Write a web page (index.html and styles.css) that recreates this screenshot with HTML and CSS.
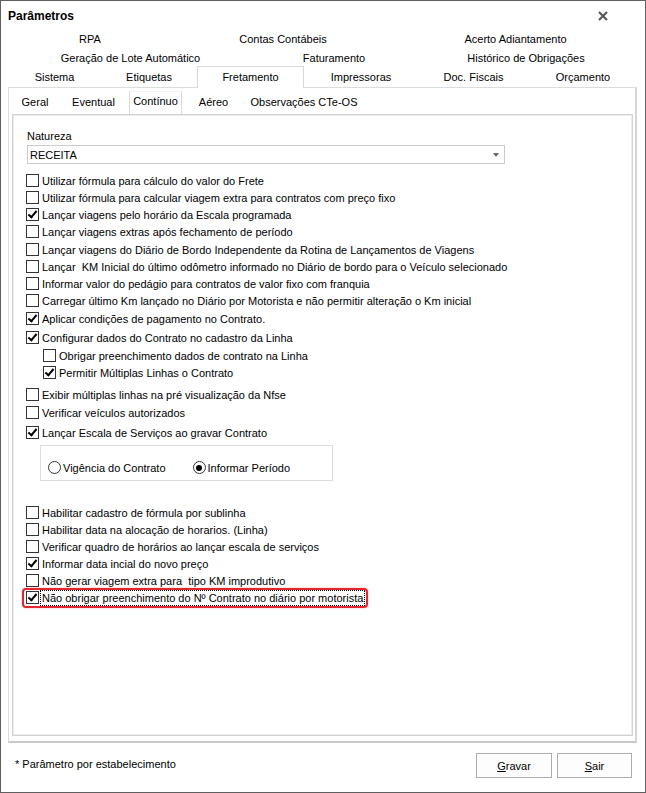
FILE: index.html
```html
<!DOCTYPE html>
<html lang="pt">
<head>
  <meta charset="UTF-8">
  <title>Parâmetros</title>
  <link rel="stylesheet" href="styles.css">
</head>
<body>

  <div class="window">
    <div class="titlebar">
      <span class="title">Parâmetros</span>
      <svg class="close" width="10" height="10" viewBox="0 0 10 10">
        <path d="M1 1 L9 9 M9 1 L1 9" stroke="#555" stroke-width="2" />
      </svg>
    </div>

    <!-- abas principais (3 linhas) -->
    <div class="tabs">
      <div class="tab-row r1">
        <span class="tab w164">RPA</span>
        <span class="tab w222">Contas Contábeis</span>
        <span class="tab w243">Acerto Adiantamento</span>
      </div>
      <div class="tab-row r2">
        <span class="tab w245">Geração de Lote Automático</span>
        <span class="tab w162">Faturamento</span>
        <span class="tab w222">Histórico de Obrigações</span>
      </div>
      <div class="tab-row r3">
        <span class="tab w93">Sistema</span>
        <span class="tab w96">Etiquetas</span>
        <span class="tab w107 sel">Fretamento</span>
        <span class="tab w114">Impressoras</span>
        <span class="tab w111">Doc. Fiscais</span>
        <span class="tab w108">Orçamento</span>
      </div>
    </div>

    <div class="panel">
      <div class="subtabs">
        <span class="subtab s46">Geral</span>
        <span class="subtab s71">Eventual</span>
        <span class="subtab s53 sel">Contínuo</span>
        <span class="subtab s63">Aéreo</span>
        <span class="subtab s118">Observações CTe-OS</span>
      </div>

      <div class="inner">
        <div class="label">Natureza</div>
        <div class="select">
          <span>RECEITA</span>
          <span class="arrow"></span>
        </div>

        <div class="checks">
          <div class="cb"><span class="box"></span><span>Utilizar fórmula para cálculo do valor do Frete</span></div>
          <div class="cb"><span class="box"></span><span>Utilizar fórmula para calcular viagem extra para contratos com preço fixo</span></div>
          <div class="cb"><span class="box on"></span><span>Lançar viagens pelo horário da Escala programada</span></div>
          <div class="cb"><span class="box"></span><span>Lançar viagens extras após fechamento de período</span></div>
          <div class="cb mt1"><span class="box"></span><span>Lançar viagens do Diário de Bordo Independente da Rotina de Lançamentos de Viagens</span></div>
          <div class="cb"><span class="box"></span><span>Lançar &nbsp;KM Inicial do último odômetro informado no Diário de bordo para o Veículo selecionado</span></div>
          <div class="cb"><span class="box"></span><span>Informar valor do pedágio para contratos de valor fixo com franquia</span></div>
          <div class="cb"><span class="box"></span><span>Carregar último Km lançado no Diário por Motorista e não permitir alteração o Km inicial</span></div>
          <div class="cb mt1"><span class="box on"></span><span>Aplicar condições de pagamento no Contrato.</span></div>
          <div class="cb mt2"><span class="box on"></span><span>Configurar dados do Contrato no cadastro da Linha</span></div>
          <div class="cb sub mt1"><span class="box"></span><span>Obrigar preenchimento dados de contrato na Linha</span></div>
          <div class="cb sub"><span class="box on"></span><span>Permitir Múltiplas Linhas o Contrato</span></div>
          <div class="cb mt5"><span class="box"></span><span>Exibir múltiplas linhas na pré visualização da Nfse</span></div>
          <div class="cb mt1"><span class="box"></span><span>Verificar veículos autorizados</span></div>
          <div class="cb mt3"><span class="box on"></span><span>Lançar Escala de Serviços ao gravar Contrato</span></div>

          <div class="group">
            <div class="rb"><span class="radio"></span><span>Vigência do Contrato</span></div>
            <div class="rb second"><span class="radio on"></span><span>Informar Período</span></div>
          </div>

          <div class="cb after-group"><span class="box"></span><span>Habilitar cadastro de fórmula por sublinha</span></div>
          <div class="cb"><span class="box"></span><span>Habilitar data na alocação de horarios. (Linha)</span></div>
          <div class="cb"><span class="box"></span><span>Verificar quadro de horários ao lançar escala de serviços</span></div>
          <div class="cb"><span class="box on"></span><span>Informar data incial do novo preço</span></div>
          <div class="cb"><span class="box"></span><span>Não gerar viagem extra para &nbsp;tipo KM improdutivo</span></div>
          <div class="cb hl"><span class="box on"></span><span class="focus">Não obrigar preenchimento do Nº Contrato no diário por motorista</span></div>
        </div>
      </div>
    </div>

    <div class="footer">
      <span class="note">* Parâmetro por estabelecimento</span>
      <div class="buttons">
        <button class="btn b76"><u>G</u>ravar</button>
        <button class="btn b75"><u>S</u>air</button>
      </div>
    </div>
  </div>

</body>
</html>
```

FILE: styles.css
```css
body {
  margin: 0;
  font-family: "Liberation Sans", Arial, sans-serif;
  font-size: 11px;
  color: #000;
  background: #fff;
}

.window {
  width: 646px;
  height: 793px;
  box-sizing: border-box;
  border: 1px solid #5f5f5f;
  background: #fff;
  display: flex;
  flex-direction: column;
}

.titlebar {
  height: 29px;
  display: flex;
  align-items: center;
  justify-content: space-between;
  padding: 0 37px 0 7px;
}

.title {
  font-weight: bold;
  font-size: 12px;
}

/* abas */
.tabs {
  margin: 0 8px 0 7px;
}

.tab-row {
  display: flex;
}

.r1 { height: 18px; }
.r2 { height: 19px; }
.r3 { height: 20px; align-items: flex-end; }

.tab {
  display: flex;
  align-items: center;
  justify-content: center;
  height: 100%;
  box-sizing: border-box;
}

.r3 .tab { height: 20px; }

.tab.sel {
  height: 22px;
  margin-bottom: -1px;
  padding-bottom: 2px;
  border: 1px solid #d9d9d9;
  border-bottom: none;
  background: #fff;
  position: relative;
  z-index: 1;
}

.w93 { width: 93px; }
.w96 { width: 96px; }
.w107 { width: 107px; }
.w108 { width: 108px; }
.w111 { width: 111px; }
.w114 { width: 114px; }
.w162 { width: 162px; }
.w164 { width: 164px; }
.w222 { width: 222px; }
.w243 { width: 243px; }
.w245 { width: 245px; }

.panel {
  margin: 0 8px 0 7px;
  height: 656px;
  box-sizing: border-box;
  border: 1px solid #dcdcdc;
  border-bottom: 2px solid #c8c8c8;
  border-right: 2px solid #d6d6d6;
  display: flex;
  flex-direction: column;
}

.subtabs {
  display: flex;
  align-items: flex-end;
  height: 26px;
  padding-left: 3px;
}

.subtab {
  height: 23px;
  box-sizing: border-box;
  display: flex;
  align-items: center;
  justify-content: center;
  padding-bottom: 1px;
}

.subtab.sel {
  border: 1px solid #dadada;
  border-top-color: #f2f2f2;
  border-bottom: none;
  padding-bottom: 4px;
}

.s46 { width: 46px; }
.s53 { width: 53px; }
.s63 { width: 63px; }
.s71 { width: 71px; }
.s118 { width: 118px; }

.inner {
  margin: 0 2px 0 3px;
  height: 622px;
  box-sizing: border-box;
  border: 1px solid #d2d2d2;
  box-shadow: inset 1px 1px 0 #ededed, inset -1px -1px 0 #ededed;
  padding: 15px 0 0 13px;
}

.label {
  height: 13px;
  line-height: 13px;
  margin-left: 1px;
}

.select {
  margin: 2px 0 0 1px;
  width: 478px;
  height: 19px;
  box-sizing: border-box;
  border: 1px solid #cccccc;
  display: flex;
  align-items: center;
  justify-content: space-between;
  padding: 0 5px 0 2px;
}

.arrow {
  width: 0;
  height: 0;
  border-left: 3.5px solid transparent;
  border-right: 3.5px solid transparent;
  border-top: 4px solid #666;
}

.checks {
  margin-top: 8px;
}

.cb {
  display: flex;
  align-items: center;
  gap: 3px;
  height: 17px;
}

.cb.sub { margin-left: 17px; }
.mt1 { margin-top: 1px; }
.mt2 { margin-top: 2px; }
.mt3 { margin-top: 3px; }
.mt5 { margin-top: 5px; }
.after-group { margin-top: 23px; }

.box {
  width: 13px;
  height: 13px;
  box-sizing: border-box;
  border: 1px solid #333;
  background: #fff;
  flex: none;
  position: relative;
}

.box.on::after {
  content: "";
  position: absolute;
  left: 3px;
  top: 0px;
  width: 3px;
  height: 7px;
  border: solid #000;
  border-width: 0 2px 2px 0;
  transform: rotate(40deg);
}

.group {
  margin: 4px 0 0 14px;
  width: 293px;
  height: 36px;
  box-sizing: border-box;
  border: 1px solid #dcdcdc;
  display: flex;
  align-items: flex-end;
  padding: 0 0 6px 7px;
}

.rb {
  display: flex;
  align-items: center;
  gap: 2px;
  height: 13px;
}

.rb.second { margin-left: 27px; }

.radio {
  width: 13px;
  height: 13px;
  box-sizing: border-box;
  border: 1px solid #333;
  border-radius: 50%;
  position: relative;
  flex: none;
}

.radio.on::after {
  content: "";
  position: absolute;
  left: 2.5px;
  top: 2.5px;
  width: 6px;
  height: 6px;
  border-radius: 50%;
  background: #000;
}

/* destaque em vermelho */
.cb.hl {
  position: relative;
  width: max-content;
}

.cb.hl::before {
  content: "";
  position: absolute;
  left: -4px;
  right: -4px;
  top: -1px;
  bottom: -2px;
  border: 2px solid #e3262b;
  border-radius: 4px;
  box-shadow: 0 0 2px rgba(227, 38, 43, 0.4);
}

.focus {
  outline: 1px dotted #000;
  outline-offset: 0;
  line-height: 14px;
  padding: 0 1px;
  margin-left: -1px;
}

.footer {
  flex: 1;
  display: flex;
  justify-content: space-between;
  align-items: flex-start;
  padding: 10px 13px 0 14px;
}

.note {
  margin-top: 5px;
}

.buttons {
  display: flex;
  gap: 5px;
}

.btn {
  height: 25px;
  font-family: "Liberation Sans", Arial, sans-serif;
  font-size: 11px;
  color: #000;
  background: #fdfdfd;
  border: 1px solid #adadad;
  padding: 0;
}

.b75 { width: 75px; }
.b76 { width: 76px; }
```
